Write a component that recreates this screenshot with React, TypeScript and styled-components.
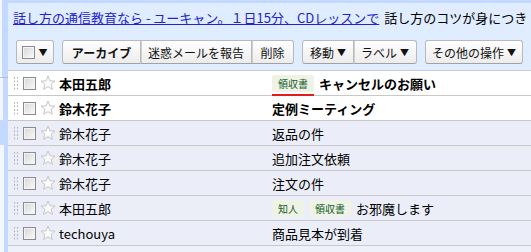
import React from 'react';
import styled, { createGlobalStyle } from 'styled-components';

const GlobalStyle = createGlobalStyle`
  html, body {
    margin: 0;
    padding: 0;
    background: #ffffff;
    font-family: "Noto Sans CJK JP", "Liberation Sans", sans-serif;
  }
`;

const Page = styled.div`
  display: flex;
  width: 531px;
  height: 252px;
  overflow: hidden;
  background: #c3d9ff;
`;

const LeftRail = styled.div`
  display: flex;
  flex-direction: column;
  width: 8px;
  flex-shrink: 0;
`;

const RailSegment = styled.div<{ $h?: number; $gap: number; $line?: boolean }>`
  ${p => (p.$h ? `height: ${p.$h}px;` : 'flex: 1;')}
  background: linear-gradient(to right, ${p => (p.$gap ? '#f4f7ff' : '#c3d9ff')} ${p => p.$gap}px, #c3d9ff ${p => p.$gap}px);
  box-shadow: ${p => (p.$line ? 'inset 0 3px 0 -2px #b8bcc8' : 'none')};
`;

const Main = styled.div`
  flex: 1;
  display: flex;
  flex-direction: column;
  padding-top: 3px;
  min-width: 0;
`;

const Panel = styled.div`
  background: #e0ecff;
  display: flex;
  flex-direction: column;
`;

const AdBar = styled.div`
  height: 28px;
  padding-left: 5px;
  display: flex;
  align-items: center;
  white-space: nowrap;
  overflow: hidden;
  font-size: 13px;
  color: #000;
`;

const AdLink = styled.a`
  color: #2323cc;
  text-decoration: underline;
  margin-right: 5px;
`;

const Toolbar = styled.div`
  display: flex;
  align-items: center;
  padding: 9px 0 6px 8px;
  gap: 8px;
`;

const ButtonGroup = styled.div`
  display: flex;
`;

const Button = styled.div<{ $w: number; $bold?: boolean; $first?: boolean; $last?: boolean }>`
  width: ${p => p.$w}px;
  height: 24px;
  box-sizing: border-box;
  display: flex;
  align-items: center;
  justify-content: center;
  gap: 2px;
  font-size: 12px;
  font-weight: ${p => (p.$bold ? 700 : 400)};
  color: #111;
  background: linear-gradient(#ffffff, #ececec);
  border: 1px solid #b9b9b9;
  border-bottom-color: #a2a2a2;
  border-left-width: ${p => (p.$first ? 1 : 0)}px;
  border-radius: ${p => `${p.$first ? 3 : 0}px ${p.$last ? 3 : 0}px ${p.$last ? 3 : 0}px ${p.$first ? 3 : 0}px`};
  box-shadow: ${p => (p.$first ? 'none' : 'inset 1px 0 0 #d0d0d0')};
`;

const Caret = styled.span`
  font-size: 9px;
  margin-left: 1px;
`;

const MailList = styled.div`
  flex: 1;
  background: #eef1f9;
  border-top: 1px solid #c6cbd6;
`;

const Row = styled.div<{ $unread?: boolean }>`
  display: flex;
  align-items: center;
  height: 24px;
  border-bottom: 1px solid #c8c8c8;
  background: ${p => (p.$unread ? '#ffffff' : '#ebeef8')};
  font-size: 13px;
  font-weight: ${p => (p.$unread ? 700 : 400)};
  color: #000;
  white-space: nowrap;
`;

const Handle = styled.div`
  width: 5px;
  height: 14px;
  margin-left: 5px;
  background-image: radial-gradient(circle, #b4b4b4 0.9px, transparent 1.1px);
  background-size: 3px 3.6px;
`;

const Check = styled.div<{ $small?: boolean }>`
  width: 13px;
  height: 13px;
  box-sizing: border-box;
  border: 1px solid #8c8c8c;
  background: linear-gradient(135deg, #d6d6d6, #fbfbfb);
  box-shadow: inset 0 0 0 1px #f4f4f4;
  margin-left: ${p => (p.$small ? 0 : 5)}px;
`;

const StarBox = styled.div`
  width: 16px;
  height: 16px;
  margin-left: 4px;
  display: flex;
`;

const Sender = styled.div`
  width: 213px;
  margin-left: 3px;
`;

const Subject = styled.div`
  display: flex;
  align-items: center;
  gap: 5px;
`;

const Chip = styled.span<{ $mark?: boolean }>`
  position: relative;
  display: inline-flex;
  align-items: center;
  height: 17px;
  padding: 0 6px;
  font-size: 10px;
  font-weight: 400;
  color: #17602c;
  background: #eef3e6;
  border-radius: 2px;
  &::after {
    content: '';
    display: ${p => (p.$mark ? 'block' : 'none')};
    position: absolute;
    left: 0;
    right: 0;
    bottom: -4px;
    height: 2px;
    background: #e21b1b;
  }
`;

const Star = () => (
  <StarBox>
    <svg width="16" height="16" viewBox="0 0 16 16">
      <path
        d="M8 1 L9.9 5.8 L15 6.1 L11.1 9.3 L12.4 14.4 L8 11.6 L3.6 14.4 L4.9 9.3 L1 6.1 L6.1 5.8 Z"
        fill="#fcfcfc"
        stroke="#c6c6c6"
        strokeWidth="1"
        strokeLinejoin="round"
      />
    </svg>
  </StarBox>
);

type Mail = { from: string; subject: string; unread?: boolean; labels?: string[]; mark?: boolean };

const mails: Mail[] = [
  { from: '本田五郎', subject: 'キャンセルのお願い', unread: true, labels: ['領収書'], mark: true },
  { from: '鈴木花子', subject: '定例ミーティング', unread: true },
  { from: '鈴木花子', subject: '返品の件' },
  { from: '鈴木花子', subject: '追加注文依頼' },
  { from: '鈴木花子', subject: '注文の件' },
  { from: '本田五郎', subject: 'お邪魔します', labels: ['知人', '領収書'] },
  { from: 'techouya', subject: '商品見本が到着' },
];

export default function App() {
  return (
    <>
      <GlobalStyle />
      <Page>
        <LeftRail>
          <RailSegment $h={77} $gap={2} />
          <RailSegment $h={43} $gap={3} $line />
          <RailSegment $h={25} $gap={0} />
          <RailSegment $gap={4} />
        </LeftRail>
        <Main>
          <Panel>
            <AdBar>
              <AdLink>話し方の通信教育なら - ユーキャン。１日15分、CDレッスンで</AdLink>
              話し方のコツが身につき
            </AdBar>
            <Toolbar>
              <ButtonGroup>
                <Button $w={38} $first $last>
                  <Check $small />
                  <Caret>▼</Caret>
                </Button>
              </ButtonGroup>
              <ButtonGroup>
                <Button $w={79} $bold $first>アーカイブ</Button>
                <Button $w={111}>迷惑メールを報告</Button>
                <Button $w={42} $last>削除</Button>
              </ButtonGroup>
              <ButtonGroup>
                <Button $w={52} $first>移動<Caret>▼</Caret></Button>
                <Button $w={63} $last>ラベル<Caret>▼</Caret></Button>
              </ButtonGroup>
              <ButtonGroup>
                <Button $w={98} $first $last>その他の操作<Caret>▼</Caret></Button>
              </ButtonGroup>
            </Toolbar>
          </Panel>
          <MailList>
            {mails.map((m, i) => (
              <Row key={i} $unread={m.unread}>
                <Handle />
                <Check />
                <Star />
                <Sender>{m.from}</Sender>
                <Subject>
                  {(m.labels || []).map(l => (
                    <Chip key={l} $mark={m.mark}>{l}</Chip>
                  ))}
                  <span>{m.subject}</span>
                </Subject>
              </Row>
            ))}
          </MailList>
        </Main>
      </Page>
    </>
  );
}
